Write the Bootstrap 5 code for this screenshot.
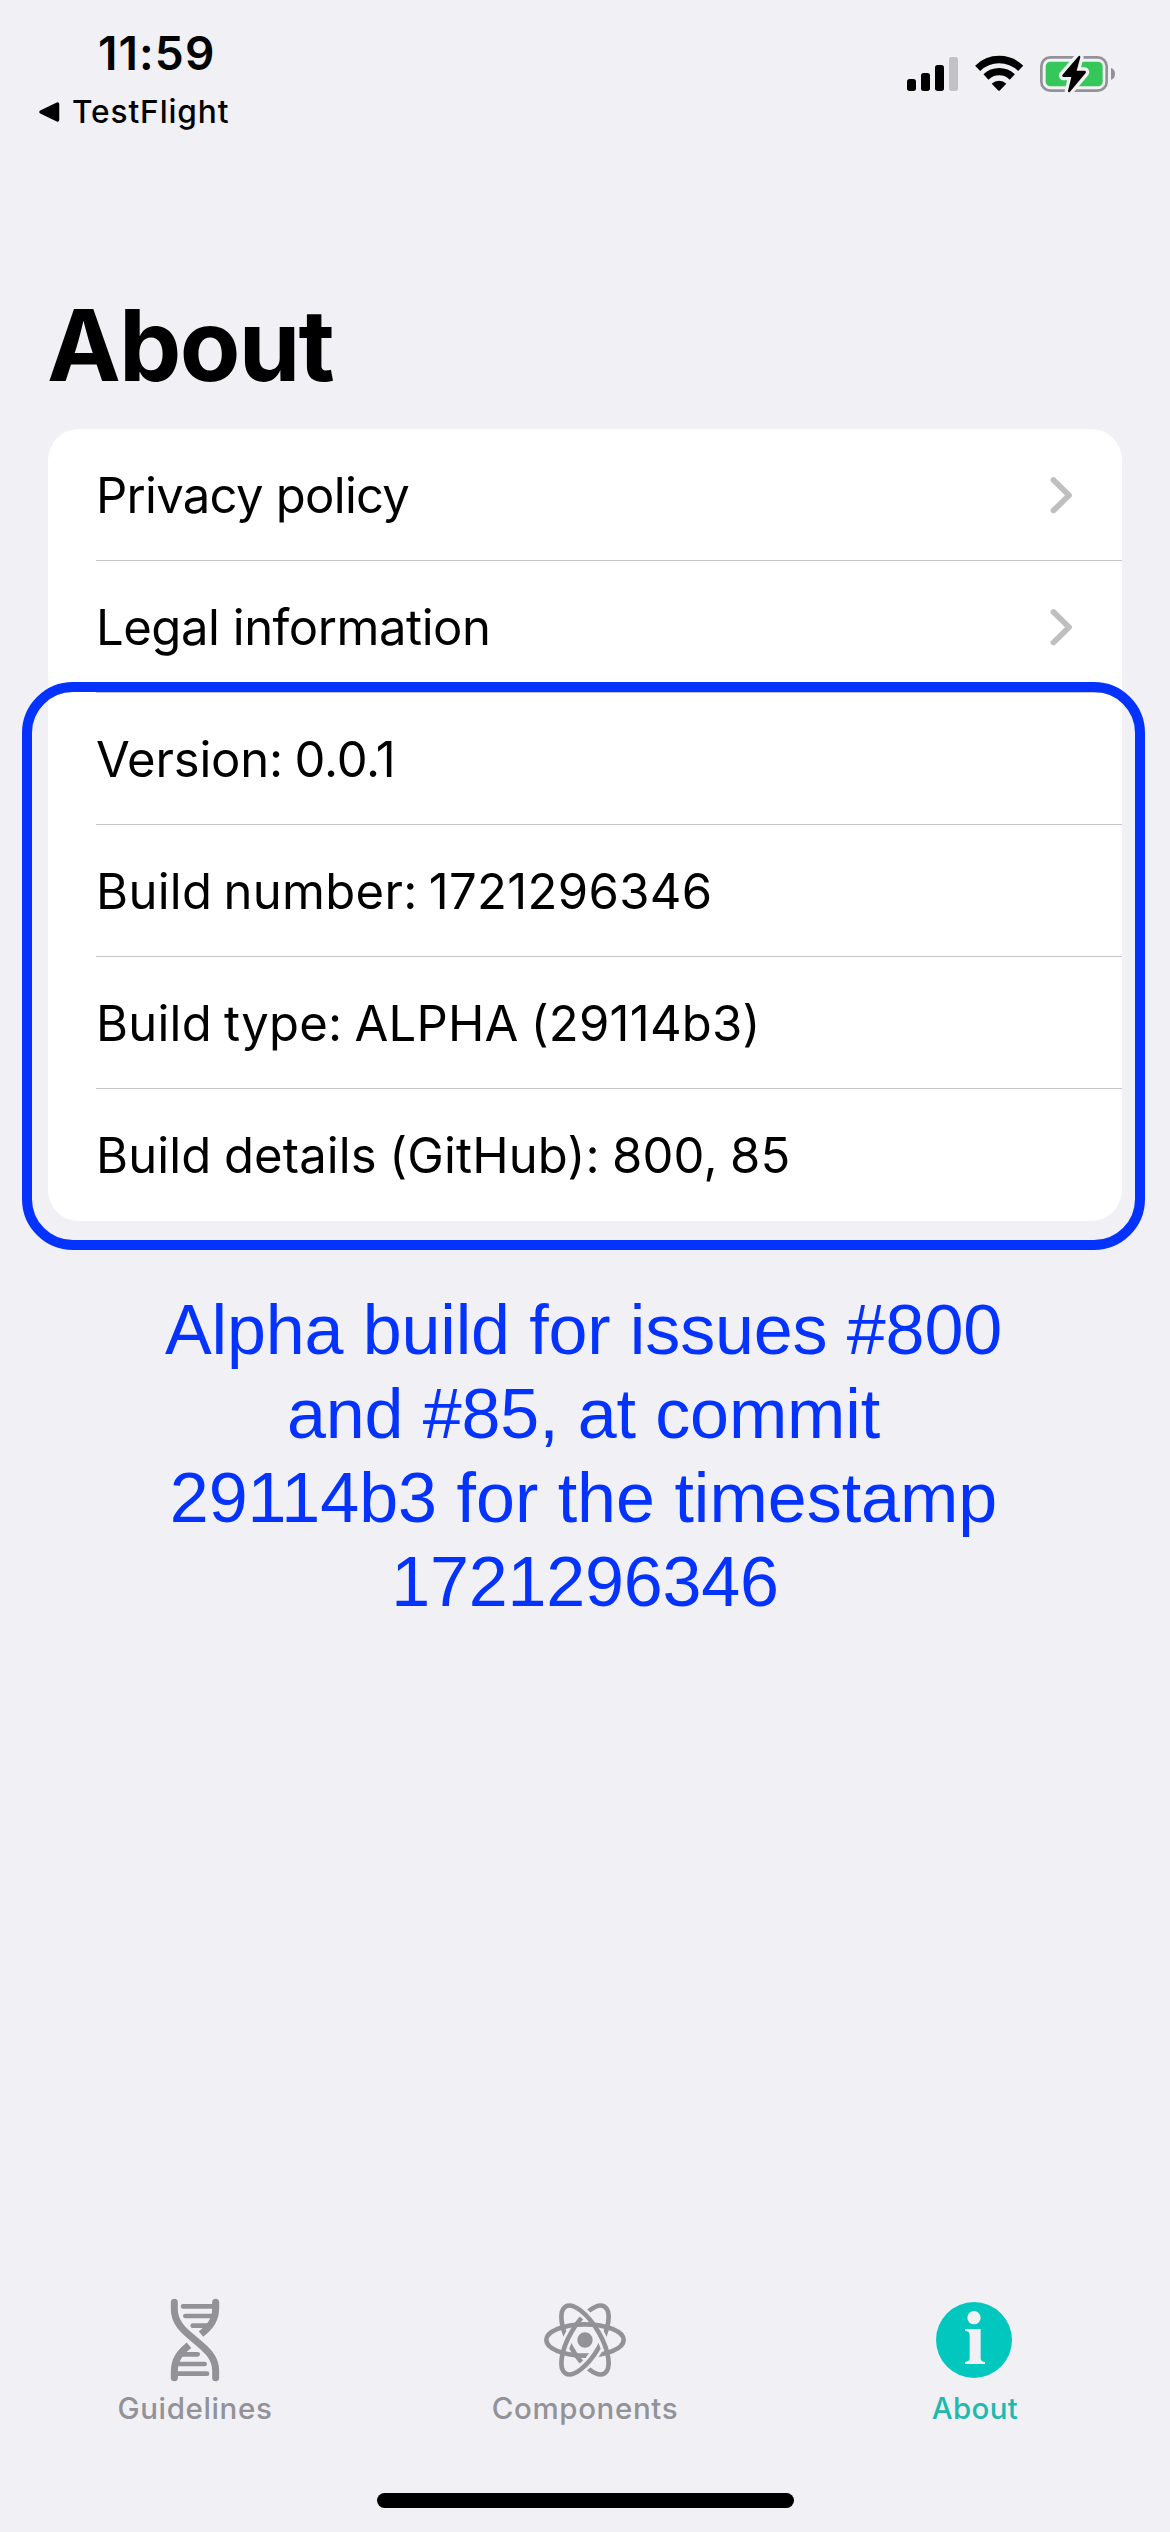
<!DOCTYPE html>
<html lang="en">
<head>
<meta charset="utf-8">
<meta name="viewport" content="width=device-width, initial-scale=1">
<title>About</title>
<link href="https://cdn.jsdelivr.net/npm/bootstrap@5.3.0/dist/css/bootstrap.min.css" rel="stylesheet">
<style>
  body { background: #f1f0f5; color: #000; font-family: Inter, Roboto, sans-serif; }
  .phone { width: 1170px; height: 2532px; overflow: hidden; }
  .status-bar { height: 276px; padding: 30px 20px 0 38px; }
  .clock { font-size: 46px; line-height: 45px; font-weight: 600; letter-spacing: 1.1px; padding: 1px 0 0 60px; }
  .back-link { margin-top: 13px; font-size: 31.6px; line-height: 45px; font-weight: 500; letter-spacing: .9px; color: #000; gap: 12px; }
  .page-title { font-size: 99px; line-height: 138px; font-weight: 700; letter-spacing: -1.8px; margin: 0 0 15px; padding-left: 47px; }
  .info-list { margin: 0 48px; border-radius: 31px; }
  .info-list .list-group-item { height: 132px; margin-left: 48px; padding: 1px 48px 0 0; border: 0; border-bottom: 1px solid #c6c6c8; border-radius: 0; background: transparent; color: #000; font-size: 49px; line-height: 131px; white-space: nowrap; }
  .info-list .list-group-item:last-child { border-bottom: 0; }
  .highlight-box { left: 22px; right: 25px; top: 253px; height: 568px; border: 10px solid #0433ff; border-radius: 51px; pointer-events: none; }
  .note { margin: 67px 0 0; padding-right: 3px; font: 400 70px/84px "Liberation Sans", sans-serif; color: #0433ff; }
  .ls-privacy { letter-spacing: -.72px; }
  .ls-legal { letter-spacing: -.46px; }
  .ls-version { letter-spacing: -.2px; word-spacing: -2px; }
  .ls-number { letter-spacing: .32px; word-spacing: -3px; }
  .ls-type { letter-spacing: .24px; word-spacing: -2px; }
  .ls-details { letter-spacing: .14px; word-spacing: -1.5px; }
  .ls-note { letter-spacing: -.13px; }
  .ls-stamp { letter-spacing: -.2px; padding-left: 3px; }
  .tab-bar { padding-top: 10px; height: 213px; }
  .tab-bar .nav-link { padding: 0; color: #929298; font-size: 29.5px; line-height: 40px; font-weight: 500; letter-spacing: .62px; }
  .tab-bar .nav-link.active { color: #20b9af; letter-spacing: .32px; }
  .tab-bar svg { width: 100px; height: 100px; margin-bottom: -2px; }
  .home-indicator { width: 417px; height: 15px; border-radius: 8px; background: #000; margin: 0 0 24px 1px; }
</style>
<script src="https://cdn.jsdelivr.net/npm/bootstrap@5.3.0/dist/js/bootstrap.bundle.min.js"></script>
</head>
<body>
<div class="phone d-flex flex-column">
  <header class="status-bar d-flex justify-content-between align-items-start">
    <div>
      <div class="clock">11:59</div>
      <a class="back-link d-flex align-items-center text-decoration-none" href="#">
        <svg width="22" height="22" viewBox="0 0 22 22" aria-hidden="true"><path d="M3 11 L19.500 3 V19 Z" fill="#000" stroke="#000" stroke-width="3.500" stroke-linejoin="round"/></svg>
        <span>TestFlight</span>
      </a>
    </div>
    <svg width="280" height="90" viewBox="0 0 840 270" aria-hidden="true">
      <!-- cellular signal -->
      <rect x="111" y="147" width="27" height="36" rx="8"/>
      <rect x="153" y="129" width="27" height="54" rx="8"/>
      <rect x="195" y="105" width="27" height="78" rx="8"/>
      <rect x="237" y="81" width="27" height="102" rx="8" fill="#c2c1c6"/>
      <!-- wifi -->
      <g fill="none" stroke="#000" stroke-width="22">
        <path d="M323 115 A92 92 0 0 1 452 115"/>
        <path d="M348 141 A57 57 0 0 1 427 141"/>
      </g>
      <path d="M365 161 A32 32 0 0 1 409 161 L390 181 Q387 184 384 181 Z"/>
      <!-- battery -->
      <rect x="514" y="82" width="196" height="100" rx="27" fill="none" stroke="#939299" stroke-width="8"/>
      <rect x="527" y="95" width="171" height="74" rx="14" fill="#35c759"/>
      <path d="M723 114 Q735 118 735 132 Q735 146 723 150 Z" fill="#929198"/>
      <path d="M626 78 L577 135 Q575 140 580 141 H604 L594 183 Q595 189 600 185 L647 129 Q650 123 643 122 H620 L631 82 Q631 75 626 78 Z" stroke="#f1f0f5" stroke-width="20" stroke-linejoin="round" paint-order="stroke"/>
    </svg>
  </header>

  <main class="flex-grow-1">
    <h1 class="page-title">About</h1>
    <div class="position-relative">
      <div class="info-list list-group bg-white">
        <a href="#" class="list-group-item d-flex justify-content-between align-items-center"><span class="ls-privacy">Privacy policy</span>
          <svg width="24" height="40" viewBox="0 0 24 40" aria-hidden="true"><path d="M3.500 5 L19 20.300 L3.500 35.500" fill="none" stroke="#bfbfbf" stroke-width="5.800" stroke-linecap="round" stroke-linejoin="round"/></svg></a>
        <a href="#" class="list-group-item d-flex justify-content-between align-items-center"><span class="ls-legal">Legal information</span>
          <svg width="24" height="40" viewBox="0 0 24 40" aria-hidden="true"><path d="M3.500 5 L19 20.300 L3.500 35.500" fill="none" stroke="#bfbfbf" stroke-width="5.800" stroke-linecap="round" stroke-linejoin="round"/></svg></a>
        <div class="list-group-item ls-version">Version: 0.0.1</div>
        <div class="list-group-item ls-number">Build number: 1721296346</div>
        <div class="list-group-item ls-type">Build type: ALPHA (29114b3)</div>
        <div class="list-group-item ls-details">Build details (GitHub): 800, 85</div>
      </div>
      <div class="highlight-box position-absolute"></div>
    </div>
    <p class="note text-center"><span class="ls-note">Alpha build for issues #800</span><br><span class="ls-note">and #85, at commit</span><br>29114b3 for the timestamp<br><span class="ls-stamp">1721296346</span></p>
  </main>

  <nav class="tab-bar nav nav-fill flex-nowrap align-items-start">
    <a class="nav-link col-4 d-flex flex-column align-items-center" href="#">
      <svg viewBox="135 30 300 300" aria-hidden="true" fill="none" stroke="currentColor" stroke-width="21">
        <g stroke-width="14" stroke-linecap="round">
          <path d="M249 79 H340 M256 108 H340 M278 137 H325"/>
          <path d="M321 281 H230 M314 252 H230 M293 223 H245"/>
        </g>
        <path d="M223 67 V88 C223 128 250 152 285 180 C320 209 347 232 347 272 V293" stroke-linecap="round"/>
        <path d="M347 67 V85 C347 120 330 140 303 162"/>
        <path d="M267 196 C240 218 223 238 223 275 V293"/>
        <circle cx="347" cy="67" r="10.500" fill="currentColor" stroke="none"/>
        <circle cx="223" cy="293" r="10.500" fill="currentColor" stroke="none"/>
      </svg>
      <span>Guidelines</span>
    </a>
    <a class="nav-link col-4 d-flex flex-column align-items-center" href="#">
      <svg viewBox="165 30 300 300" aria-hidden="true" fill="none" stroke="currentColor" stroke-width="14">
        <defs>
          <clipPath id="lowerLeft"><rect x="215" y="152" width="130" height="150"/></clipPath>
          <clipPath id="upperRight"><rect x="285" y="58" width="130" height="150"/></clipPath>
          <clipPath id="lowerRight"><rect x="318" y="205" width="50" height="45"/></clipPath>
          <mask id="cutRising" maskUnits="userSpaceOnUse" x="165" y="30" width="300" height="300">
            <rect x="165" y="30" width="300" height="300" fill="#fff" stroke="none"/>
            <g clip-path="url(#lowerLeft)"><ellipse cx="315" cy="180" rx="116" ry="47" transform="rotate(-60 315 180)" stroke="#000" stroke-width="30"/></g>
          </mask>
          <mask id="cutFalling" maskUnits="userSpaceOnUse" x="165" y="30" width="300" height="300">
            <rect x="165" y="30" width="300" height="300" fill="#fff" stroke="none"/>
            <g clip-path="url(#upperRight)"><ellipse cx="315" cy="180" rx="116" ry="47" transform="rotate(60 315 180)" stroke="#000" stroke-width="30"/></g>
          </mask>
          <mask id="cutFlat" maskUnits="userSpaceOnUse" x="165" y="30" width="300" height="300">
            <rect x="165" y="30" width="300" height="300" fill="#fff" stroke="none"/>
            <g clip-path="url(#lowerRight)"><ellipse cx="315" cy="180" rx="116" ry="47" transform="rotate(-60 315 180)" stroke="#000" stroke-width="30"/></g>
          </mask>
        </defs>
        <g mask="url(#cutFlat)"><ellipse cx="315" cy="180" rx="116" ry="47"/></g>
        <g mask="url(#cutRising)"><ellipse cx="315" cy="180" rx="116" ry="47" transform="rotate(60 315 180)"/></g>
        <g mask="url(#cutFalling)"><ellipse cx="315" cy="180" rx="116" ry="47" transform="rotate(-60 315 180)"/></g>
        <circle cx="315" cy="180" r="23" fill="currentColor" stroke="none"/>
      </svg>
      <span>Components</span>
    </a>
    <a class="nav-link active col-4 d-flex flex-column align-items-center" href="#">
      <svg viewBox="135 30 300 300" aria-hidden="true">
        <circle cx="282" cy="180" r="114" fill="#02c7be"/>
        <circle cx="282" cy="113" r="20" fill="#f1f0f5"/>
        <path d="M255 147 H302 V235 Q302 246 315 246 V252 H255 V246 Q269 245 269 235 V166 Q269 153 255 153 Z" fill="#f1f0f5"/>
      </svg>
      <span>About</span>
    </a>
  </nav>
  <div class="home-indicator align-self-center"></div>
</div>
</body>
</html>
